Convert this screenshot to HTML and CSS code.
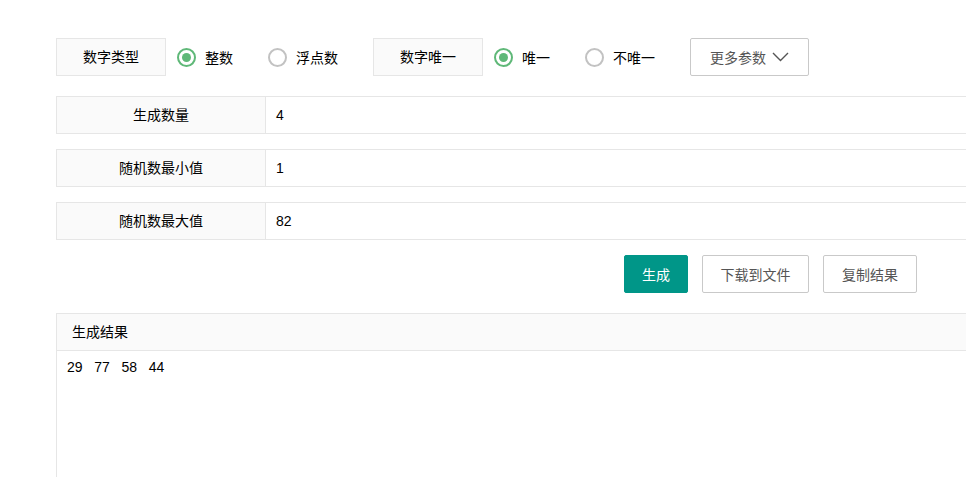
FILE: index.html
```html
<!doctype html>
<html lang="zh-CN">
  <head>
    <meta charset="UTF-8" />
    <title>随机数生成</title>
    <link rel="stylesheet" href="styles.css">
  </head>
  <body>
    <div class="page">
      <div class="options">
        <div class="label-box">数字类型</div>
        <div class="radio checked"><i class="radio-icon"></i><span>整数</span></div>
        <div class="radio"><i class="radio-icon"></i><span>浮点数</span></div>
        <div class="label-box">数字唯一</div>
        <div class="radio checked"><i class="radio-icon"></i><span>唯一</span></div>
        <div class="radio"><i class="radio-icon"></i><span>不唯一</span></div>
        <button class="btn more">更多参数
          <svg width="17" height="10" viewBox="0 0 17 10"><path d="M1 1l7.5 7.5L16 1" fill="none" stroke="#555" stroke-width="1.4"/></svg>
        </button>
      </div>

      <div class="field">
        <div class="field-label">生成数量</div>
        <div class="field-value">4</div>
      </div>
      <div class="field">
        <div class="field-label">随机数最小值</div>
        <div class="field-value">1</div>
      </div>
      <div class="field">
        <div class="field-label">随机数最大值</div>
        <div class="field-value">82</div>
      </div>

      <div class="actions">
        <button class="btn primary">生成</button>
        <button class="btn download">下载到文件</button>
        <button class="btn copy">复制结果</button>
      </div>

      <div class="result">
        <div class="result-head">生成结果</div>
        <div class="result-body">29   77   58   44</div>
      </div>
    </div>
  </body>
</html>
```

FILE: styles.css
```css
html, body {
  margin: 0;
  padding: 0;
  overflow: hidden;
  background: #fff;
}

body {
  font-family: 'Liberation Sans', 'Noto Sans CJK SC', sans-serif;
  font-size: 14px;
  color: #333;
}

.page {
  padding: 38px 0 0 56px;
  width: 1100px;
}

/* top option row */
.options {
  display: flex;
  align-items: center;
  gap: 11px;
  height: 38px;
}

.label-box {
  box-sizing: border-box;
  width: 110px;
  height: 38px;
  line-height: 36px;
  text-align: center;
  background: #fafafa;
  border: 1px solid #e6e6e6;
  color: #000;
}

.radio {
  display: flex;
  align-items: center;
  gap: 9px;
  margin-right: 24px;
  color: #000;
}

.radio-icon {
  box-sizing: border-box;
  width: 19px;
  height: 19px;
  border: 2px solid #c2c2c2;
  border-radius: 50%;
  display: flex;
  align-items: center;
  justify-content: center;
}

.radio.checked .radio-icon {
  border-color: #5fb878;
}

.radio.checked .radio-icon::after {
  content: '';
  width: 9px;
  height: 9px;
  border-radius: 50%;
  background: #5fb878;
}

.btn {
  box-sizing: border-box;
  height: 38px;
  padding: 0;
  font-family: inherit;
  font-size: 14px;
  color: #555;
  background: #fff;
  border: 1px solid #c9c9c9;
  border-radius: 2px;
  cursor: pointer;
}

.btn.more {
  width: 119px;
  display: flex;
  align-items: center;
  gap: 6px;
  padding: 0 0 0 19px;
}

.btn.primary {
  width: 64px;
  background: #009688;
  border-color: #009688;
  color: #fff;
}

.btn.download {
  width: 107px;
}

.btn.copy {
  width: 94px;
}

/* input rows */
.field {
  display: flex;
  height: 38px;
  box-sizing: border-box;
  border: 1px solid #e6e6e6;
  margin-top: 15px;
}

.options + .field {
  margin-top: 20px;
}

.field-label {
  width: 208px;
  text-align: center;
  line-height: 36px;
  background: #fafafa;
  border-right: 1px solid #e6e6e6;
  color: #000;
}

.field-value {
  padding-left: 10px;
  line-height: 36px;
  color: #000;
}

.actions {
  display: flex;
  gap: 14px;
  margin-top: 15px;
  padding-left: 568px;
}

/* result panel */
.result {
  margin-top: 20px;
  border: 1px solid #e6e6e6;
  border-bottom: none;
  height: 200px;
}

.result-head {
  height: 36px;
  line-height: 36px;
  padding-left: 15px;
  background: #fafafa;
  border-bottom: 1px solid #e6e6e6;
  color: #000;
}

.result-body {
  padding: 8px 10px;
  white-space: pre;
  color: #000;
}
```
